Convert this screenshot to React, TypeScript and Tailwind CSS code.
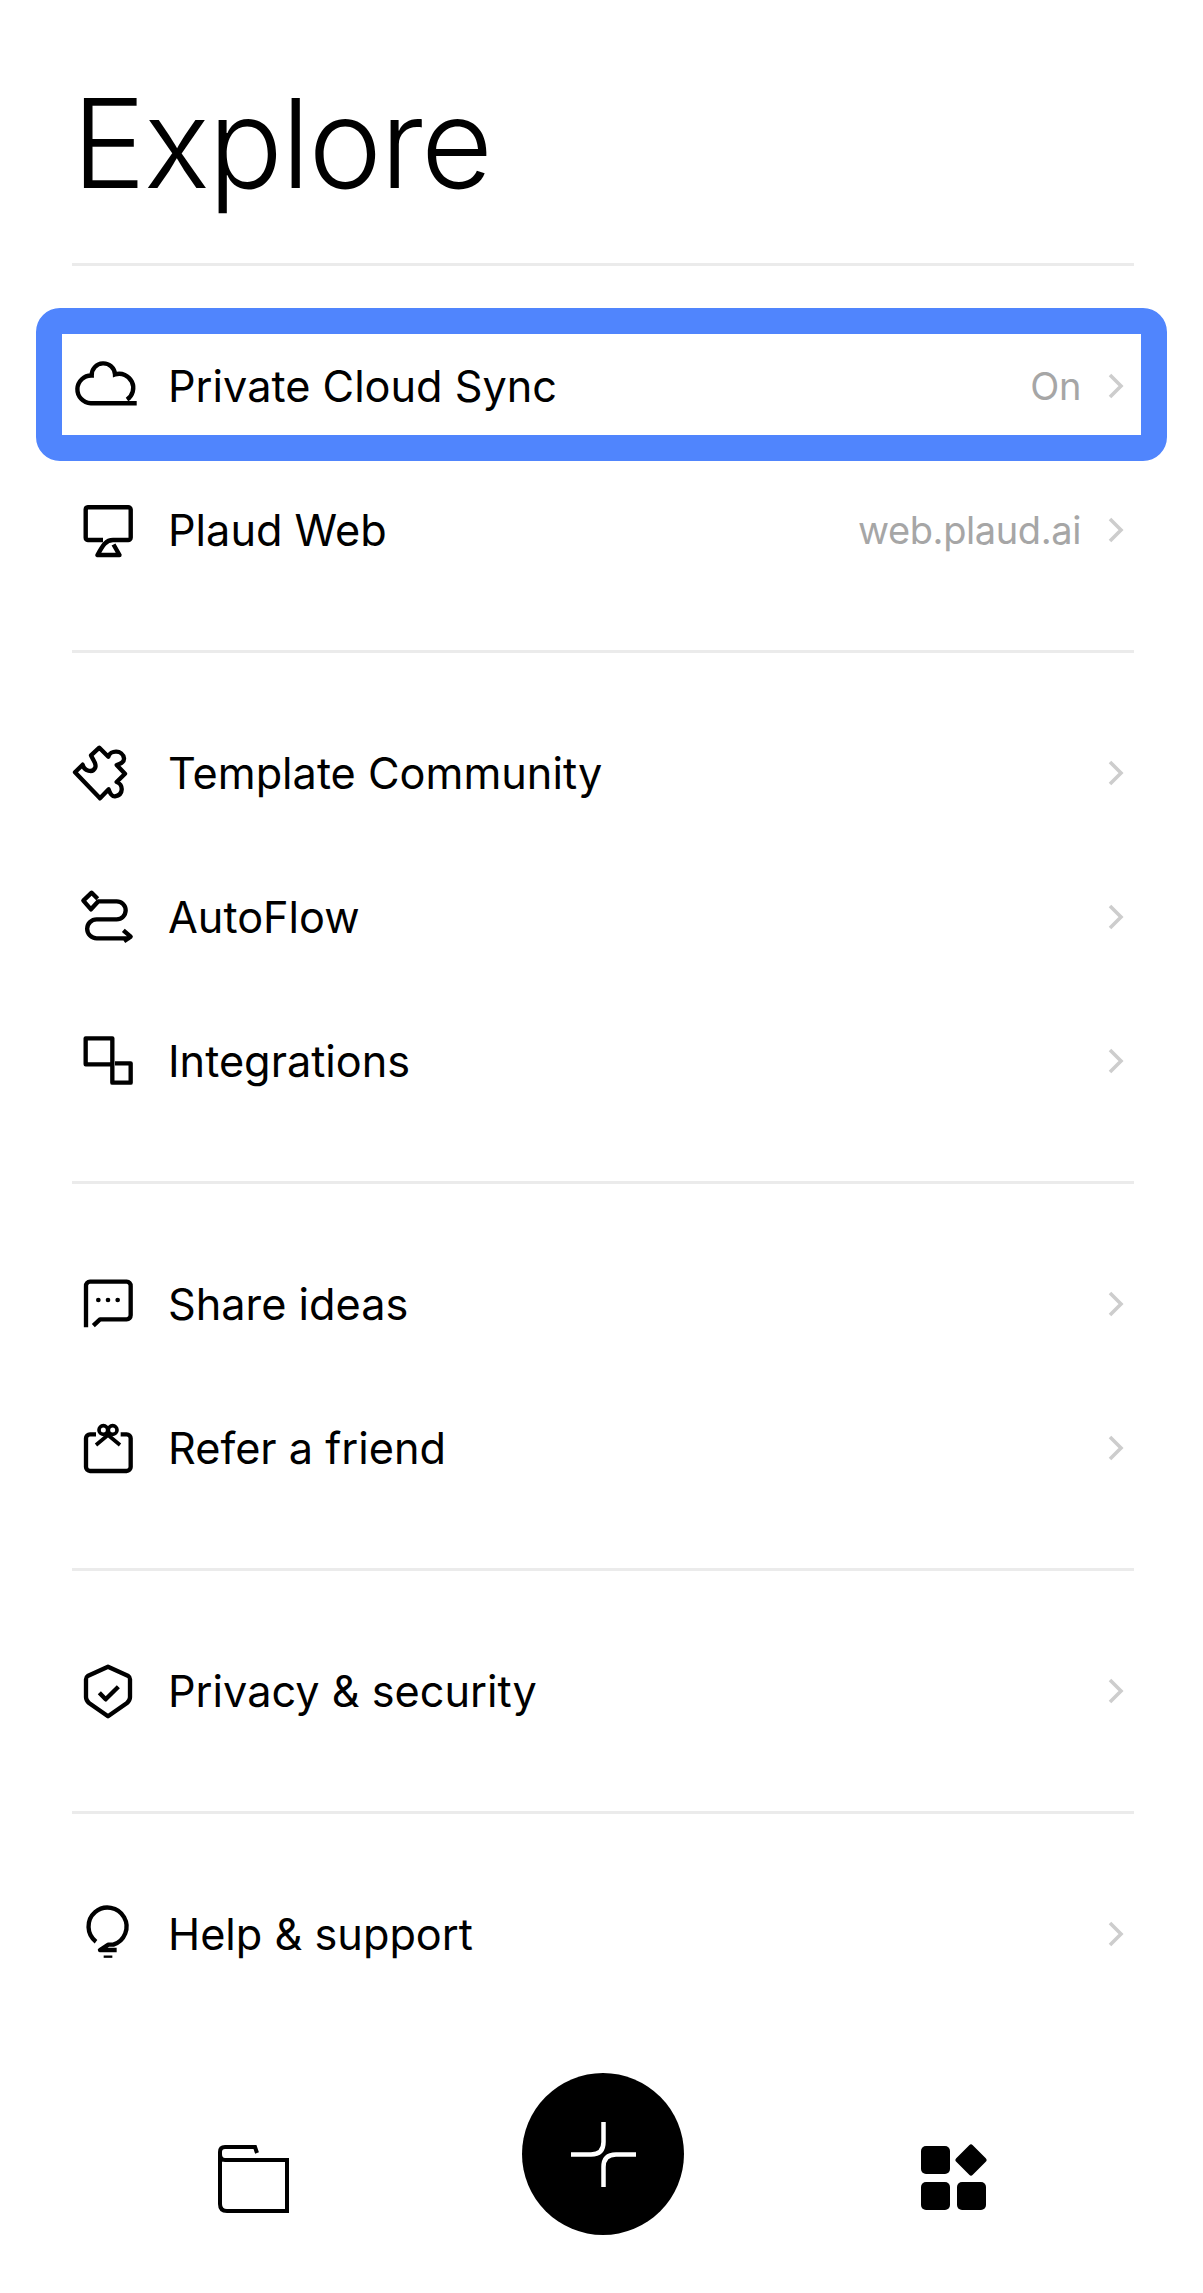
import React from "react";

function Ic({ box, children }: { box: string; children: React.ReactNode }) {
  return (
    <svg width="72" height="72" viewBox={box} fill="none" stroke="#000" strokeWidth="13" strokeLinejoin="round" className="shrink-0 block overflow-visible">
      {children}
    </svg>
  );
}

const Cloud = () => (
  <svg width="72" height="72" viewBox="0 0 72 72" fill="none" stroke="#000" strokeWidth="4.4" className="shrink-0 block">
    <path d="M64.700 53.200H18.800A13.600 13.600 0 0 1 19.700 25.500A11.650 11.650 0 0 1 43 24.500A14 14 0 0 1 55 49.500" />
  </svg>
);
const Monitor = () => (
  <svg width="72" height="72" viewBox="0 0 72 72" fill="none" stroke="#000" strokeWidth="4.4" strokeLinejoin="round" className="shrink-0 block">
    <path d="M31 46H16A2.500 2.500 0 0 1 13.700 43.500V15.800A2.500 2.500 0 0 1 16 13.300H56A2.500 2.500 0 0 1 58.700 15.800V43.500A2.500 2.500 0 0 1 56 46H41C34 46 31 51 25.500 61H47.500L41.500 50.500" />
  </svg>
);
const Puzzle = () => (
  <Ic box="36 21 216 216">
    <path d="M45 127L68 104C72 122 98 132 106 112C110 100 100 92 93 76L118 53L145 80C150 60 188 58 192 85C193 97 180 102 170 105L195 131L170 156C190 162 192 195 165 199C155 200 150 190 146 178L120 205Z" />
  </Ic>
);
const Flow = () => (
  <Ic box="36 453 216 216">
    <path d="M113 506L95 488L70 512L93 538L115 514H170A27 27 0 0 1 170 568H110A28 28 0 0 0 110 625H208M190 601L212 620L192 634" />
  </Ic>
);
const Integr = () => (
  <Ic box="36 885 216 216">
    <path d="M157 1003H77V925H157V1058H212V1000H165" />
  </Ic>
);
const Chat = () => (
  <Ic box="36 24 216 216">
    <path d="M78 202V78A12 12 0 0 1 90 65H200A12 12 0 0 1 212 78V166A12 12 0 0 1 200 178H120L100 197" />
    <circle cx="115" cy="120" r="7" fill="#000" stroke="none" />
    <circle cx="144" cy="120" r="7" fill="#000" stroke="none" />
    <circle cx="173" cy="120" r="7" fill="#000" stroke="none" />
  </Ic>
);
const Gift = () => (
  <Ic box="36 453 216 216">
    <path d="M108 520H90A12 12 0 0 0 78 532V618A12 12 0 0 0 90 630H200A12 12 0 0 0 212 618V532A12 12 0 0 0 200 520H182" />
    <path d="M108 552L144 522L180 552" strokeWidth="11" />
    <circle cx="130" cy="507" r="13" strokeWidth="11" />
    <circle cx="158" cy="507" r="13" strokeWidth="11" />
  </Ic>
);
const Shield = () => (
  <Ic box="36 15 216 216">
    <path d="M144 50L205 78Q210 81 210 88V142Q210 152 200 160L144 199L88 160Q78 152 78 142V88Q78 81 83 78Z" />
    <path d="M118 128L137 148L175 110" />
  </Ic>
);
const Bulb = () => (
  <Ic box="36 744 216 216">
    <path d="M108 875A57 57 0 1 1 160 884H145L120 900H170" />
    <path d="M131 920H157" strokeWidth="7" />
  </Ic>
);

const Chevron = () => (
  <svg width="18" height="28" viewBox="0 0 18 28" fill="none" stroke="#cdcdcd" strokeWidth="3.6" className="shrink-0 block">
    <path d="M3 3L14 14L3 25" />
  </svg>
);

function Row({ icon, label, value, selected }: { icon: React.ReactNode; label: string; value?: string; selected?: boolean }) {
  return (
    <div className="relative flex h-[144px] items-center">
      {icon}
      <span className="mt-[1px] ml-[24px] flex-1 text-[43.25px] leading-none font-[370] text-black">{label}</span>
      {value && <span className="text-[38px] leading-none font-[370] tracking-[-0.4px] text-[#a6a6a6]">{value}</span>}
      <span className="ml-[26px] mr-[9px]">
        <Chevron />
      </span>
      {selected && <div className="pointer-events-none absolute -top-[6px] -bottom-[3px] -left-[36px] -right-[33px] rounded-[24px] border-[26px] border-[#5085fd]" />}
    </div>
  );
}

const Divider = () => <div className="my-[48px] h-[3px] bg-[#ebebeb]" />;

export default function App() {
  return (
    <div className="h-[2293px] w-[1203px] overflow-hidden bg-white [font-family:Inter,sans-serif]">
      <div className="ml-[72px] w-[1062px]">
        <h1 className="pt-[81px] text-[124px] leading-none font-light tracking-[-1.7px] text-black">Explore</h1>
        <div className="mt-[58px] mb-[48px] h-[3px] bg-[#ebebeb]" />
        <Row icon={<Cloud />} label="Private Cloud Sync" value="On" selected />
        <Row icon={<Monitor />} label="Plaud Web" value="web.plaud.ai" />
        <Divider />
        <Row icon={<Puzzle />} label="Template Community" />
        <Row icon={<Flow />} label="AutoFlow" />
        <Row icon={<Integr />} label="Integrations" />
        <Divider />
        <Row icon={<Chat />} label="Share ideas" />
        <Row icon={<Gift />} label="Refer a friend" />
        <Divider />
        <Row icon={<Shield />} label="Privacy & security" />
        <Divider />
        <Row icon={<Bulb />} label="Help & support" />
      </div>
      <div className="mt-[67px] grid grid-cols-[350px_350px_350px] items-center justify-items-center pl-[78px]">
        <svg width="71" height="68" viewBox="0 0 71 68" fill="none" stroke="#000" strokeWidth="4" className="mt-[50px] block">
          <path d="M39 8L37 2H7Q2 2 2 7V59Q2 66 9 66H69V15H7Q2 15 2 9" />
        </svg>
        <div className="flex h-[162px] w-[162px] items-center justify-center rounded-full bg-black">
          <svg width="65" height="65" viewBox="0 0 65 65" fill="none" stroke="#fff" strokeWidth="4.5" className="block">
            <path d="M32.500 0V20Q32.500 32.500 20 32.500H0M65 32.500H45Q32.500 32.500 32.500 45V65" />
          </svg>
        </div>
        <svg width="67" height="67" viewBox="0 0 67 67" fill="#000" className="mt-[46px] ml-[2px] block">
          <rect x="0" y="2" width="29" height="28" rx="5" />
          <rect x="0" y="38" width="29" height="28" rx="5" />
          <rect x="36" y="38" width="29" height="28" rx="5" />
          <path d="M50 3L63 16L50 29L37 16Z" stroke="#000" strokeWidth="5" strokeLinejoin="round" />
        </svg>
      </div>
    </div>
  );
}
